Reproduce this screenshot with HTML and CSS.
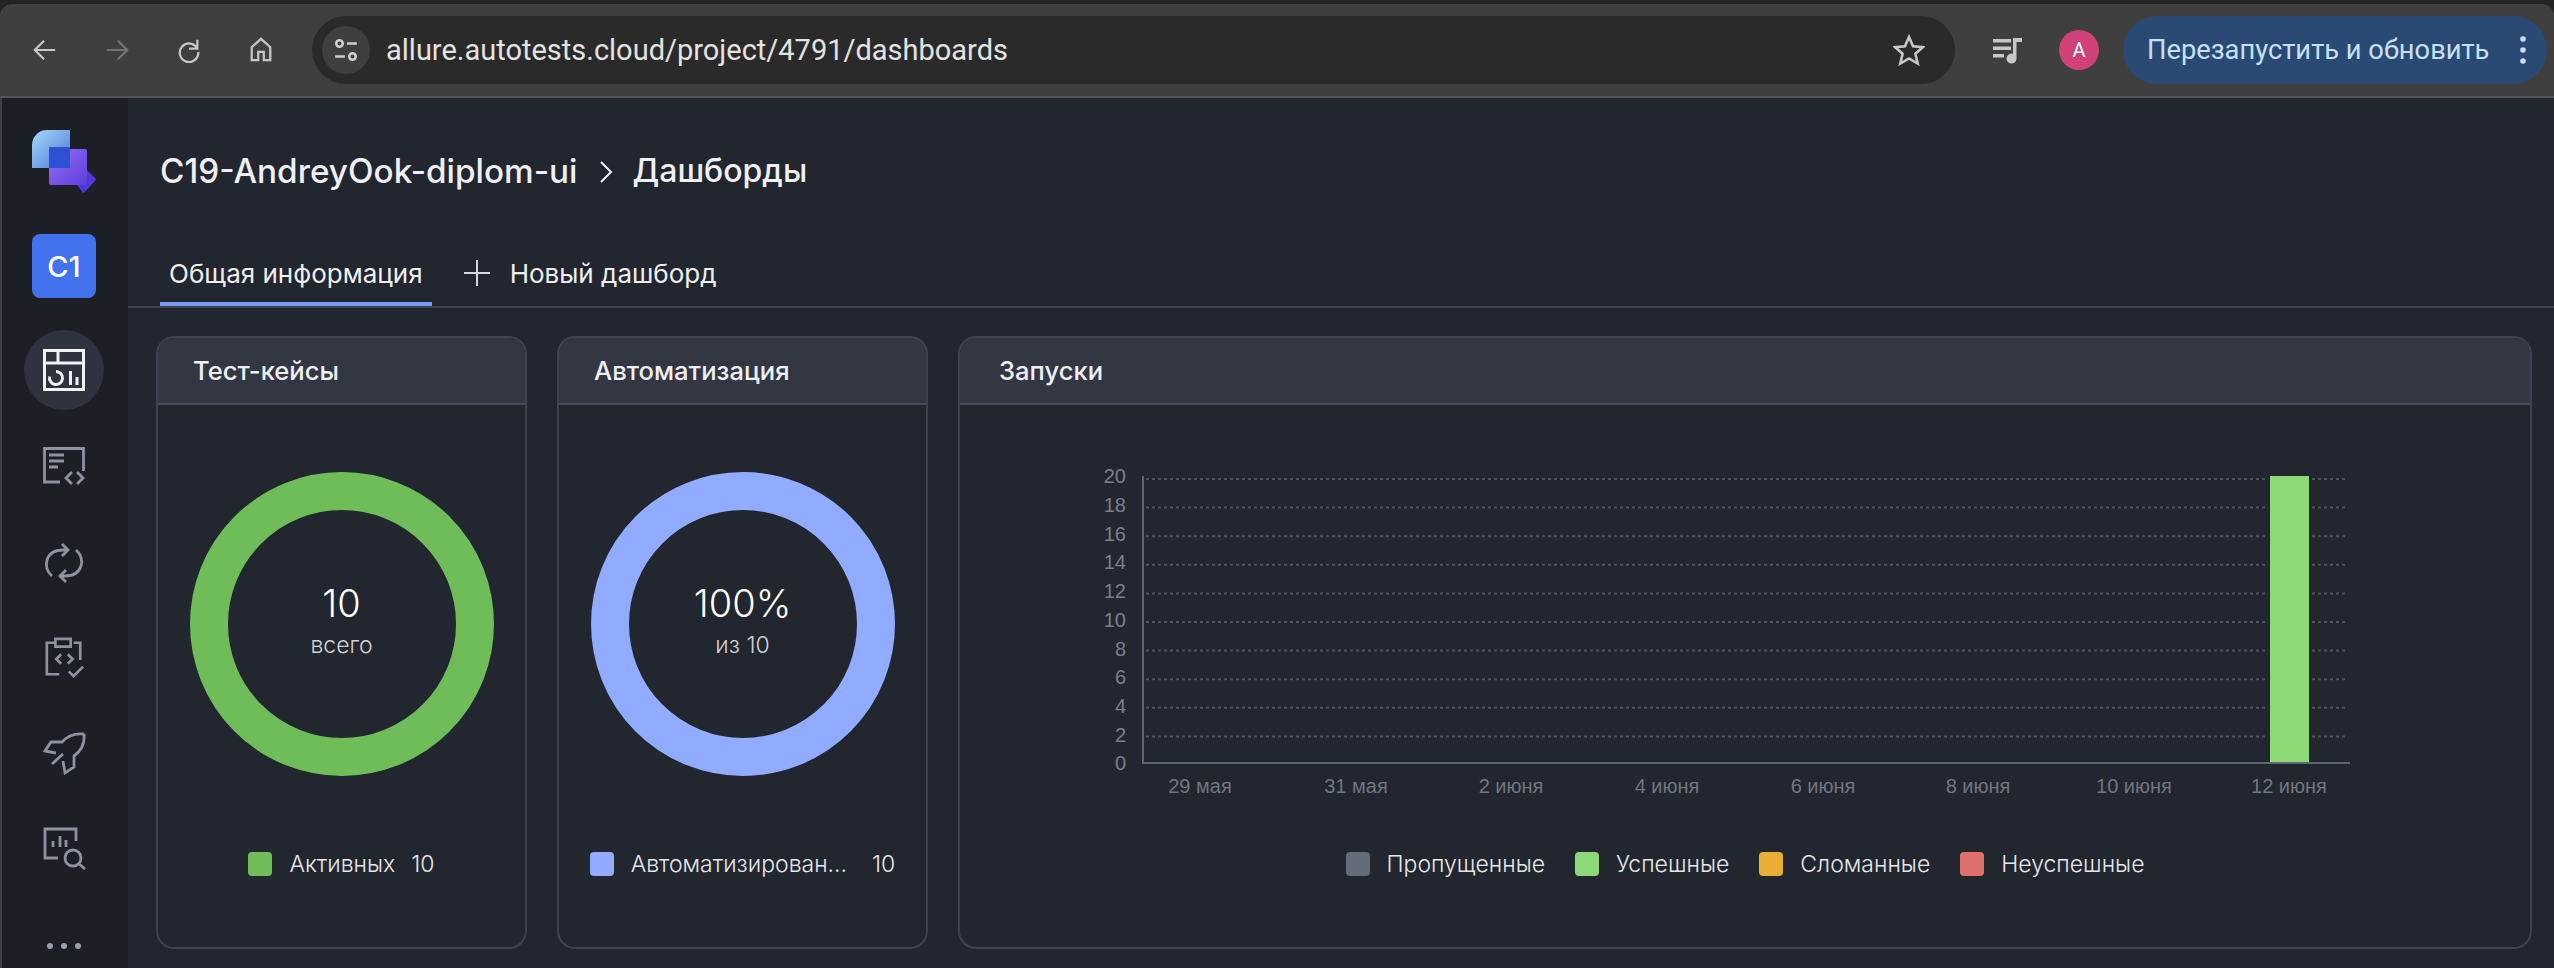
FILE: index.html
```html
<!DOCTYPE html>
<html lang="ru">

<head>
    <meta charset="UTF-8">
    <title>Дашборды</title>
    <link rel="stylesheet" href="styles.css">
</head>

<body>
    <header class="toolbar">
        <svg class="nav-icon" viewBox="0 0 28 28"><path d="M25 14H4M13 4L3 14l10 10"/></svg>
        <svg class="nav-icon dimmed" viewBox="0 0 28 28"><path d="M3 14h21M15 4l10 10-10 10"/></svg>
        <svg class="nav-icon" viewBox="0 0 28 28"><path d="M23 12.500A10 10 0 1 0 24 16M23 3v9.500h-9"/></svg>
        <svg class="nav-icon" viewBox="0 0 28 28"><path d="M4 25V11L14 2l10 9v14h-7v-9h-6v9z"/></svg>
        <div class="omnibox">
            <span class="site-chip">
                <svg viewBox="0 0 24 24"><circle cx="6" cy="6" r="3"/><path d="M13 6h9M2 18h9"/><circle cx="18" cy="18" r="3"/></svg>
            </span>
            <span class="url">allure.autotests.cloud/project/4791/dashboards</span>
            <svg class="star" viewBox="0 0 32 32"><path d="M16 3l4 9.200 10 .9-7.600 6.600 2.300 9.800L16 24.400 7.300 29.500l2.300-9.800L2 13.100l10-.9z"/></svg>
        </div>
        <svg class="media-icon" viewBox="0 0 32 28"><path d="M1 3h18V6.500H1zM1 10.500h18V14H1zM1 18h11v3.500H1z"/><path d="M21 2h9v4h-5.500v16.500a5 5 0 1 1-3.500-4.700z"/></svg>
        <span class="avatar">A</span>
        <div class="update-btn">
            <span>Перезапустить и обновить</span>
            <svg viewBox="0 0 8 32"><circle cx="4" cy="5" r="2.800"/><circle cx="4" cy="16" r="2.800"/><circle cx="4" cy="27" r="2.800"/></svg>
        </div>
    </header>

    <div class="app">
        <nav class="sidebar">
            <svg class="logo" viewBox="0 0 64 64">
                <defs>
                    <linearGradient id="logoBlue" x1="0" y1="0" x2="1" y2="1">
                        <stop offset="0" stop-color="#a5d8fc"/>
                        <stop offset="1" stop-color="#4a78d6"/>
                    </linearGradient>
                    <linearGradient id="logoPurple" x1="0" y1="0" x2="1" y2="1">
                        <stop offset="0" stop-color="#9a6ef8"/>
                        <stop offset="1" stop-color="#5a3edb"/>
                    </linearGradient>
                </defs>
                <path d="M43 52l12-12 9 9-1 2-10 11-2 1z" fill="#4f37d8"/>
                <path d="M17 19h36a2 2 0 0 1 2 2v32a2 2 0 0 1-2 2H19a2 2 0 0 1-2-2z" fill="url(#logoPurple)"/>
                <path d="M15 0h23v38H0V15A15 15 0 0 1 15 0z" fill="url(#logoBlue)"/>
                <rect x="17" y="17" width="21" height="21" fill="#2f50d2"/>
            </svg>
            <div class="project-tile">C1</div>
            <div class="nav-active">
                <svg class="side-icon" viewBox="0 0 42 42">
                    <path d="M1.500 1.500h39v39h-39zM1.500 14h39M15 1.500V14"/>
                    <path d="M13 22.500A6.500 6.500 0 1 1 6.700 27.500M27.500 22v14M34 28v8"/>
                </svg>
            </div>
            <svg class="side-icon" viewBox="0 0 42 42"><path d="M17 35H1.500V1.500h39V24M6 8h15M6 14h15M6 20h9M29 25l-6 6 6 6M34 25l6 6-6 6"/></svg>
            <svg class="side-icon" viewBox="0 0 42 42"><path d="M9 34C-1 26 2 8 20 8h5M19 2l6 6-6 6M33 8c10 8 7 26-11 26h-5M23 28l-6 6 6 6"/></svg>
            <svg class="side-icon" viewBox="0 0 42 44"><path d="M12 6H3v33h13M31 6h7v18M12 2h16v8H12zM18 18l-5 5 5 5M25 18l5 5-5 5M26 36l5 5 10-10"/></svg>
            <svg class="side-icon" viewBox="0 0 42 42"><path d="M41 2C32 1 25 3 19 10H8l-6 9 11 2M41 2c1 9-3 17-10 22v11l-9 6-2-12M9 32l11-10"/></svg>
            <svg class="side-icon" viewBox="0 0 42 42"><path d="M15 31H2V2h31v12M10 20v-6M17 20V9M23 20v-7"/><circle cx="30" cy="31" r="8"/><path d="M36 37l6 5"/></svg>
            <div class="more-dots"><i></i><i></i><i></i></div>
        </nav>

        <main class="content">
            <div class="breadcrumb">
                <span class="crumb-project">C19-AndreyOok-diplom-ui</span>
                <svg viewBox="0 0 14 24"><path d="M2 2l10 10L2 22"/></svg>
                <span>Дашборды</span>
            </div>

            <div class="tabs">
                <div class="tab active">Общая информация</div>
                <div class="tab">
                    <svg viewBox="0 0 26 26"><path d="M13 0v26M0 13h26"/></svg>
                    Новый дашборд
                </div>
            </div>

            <section class="cards">
                <article class="card">
                    <h2 class="card-title">Тест-кейсы</h2>
                    <div class="donut green">
                        <span class="donut-value">10</span>
                        <span class="donut-caption">всего</span>
                    </div>
                    <div class="legend">
                        <span class="swatch bg-green"></span>
                        <span>Активных</span>
                        <span class="legend-count">10</span>
                    </div>
                </article>

                <article class="card">
                    <h2 class="card-title">Автоматизация</h2>
                    <div class="donut blue">
                        <span class="donut-value">100%</span>
                        <span class="donut-caption">из 10</span>
                    </div>
                    <div class="legend">
                        <span class="swatch bg-blue"></span>
                        <span>Автоматизирован...</span>
                        <span class="legend-count wide">10</span>
                    </div>
                </article>

                <article class="card">
                    <h2 class="card-title wide">Запуски</h2>
                    <svg class="chart" viewBox="1050 440 1400 380">
                        <path class="grid" d="M1146 479H2268M2312 479H2348M1146 507.600H2268M2312 507.600H2348M1146 536.200H2268M2312 536.200H2348M1146 564.800H2268M2312 564.800H2348M1146 593.400H2268M2312 593.400H2348M1146 622H2268M2312 622H2348M1146 650.600H2268M2312 650.600H2348M1146 679.200H2268M2312 679.200H2348M1146 707.800H2268M2312 707.800H2348M1146 736.400H2268M2312 736.400H2348"/>
                        <path class="axis" d="M1143 476V763H2350"/>
                        <rect x="2270" y="476" width="39" height="286" fill="#8cd975"/>
                        <g class="y-labels">
                            <text x="1126" y="483">20</text>
                            <text x="1126" y="512">18</text>
                            <text x="1126" y="541">16</text>
                            <text x="1126" y="569">14</text>
                            <text x="1126" y="598">12</text>
                            <text x="1126" y="627">10</text>
                            <text x="1126" y="656">8</text>
                            <text x="1126" y="684">6</text>
                            <text x="1126" y="713">4</text>
                            <text x="1126" y="742">2</text>
                            <text x="1126" y="770">0</text>
                        </g>
                        <g class="x-labels">
                            <text x="1200" y="793">29 мая</text>
                            <text x="1356" y="793">31 мая</text>
                            <text x="1511" y="793">2 июня</text>
                            <text x="1667" y="793">4 июня</text>
                            <text x="1823" y="793">6 июня</text>
                            <text x="1978" y="793">8 июня</text>
                            <text x="2134" y="793">10 июня</text>
                            <text x="2289" y="793">12 июня</text>
                        </g>
                    </svg>
                    <div class="legend runs">
                        <span class="legend-item"><span class="swatch bg-gray"></span>Пропущенные</span>
                        <span class="legend-item"><span class="swatch bg-lime"></span>Успешные</span>
                        <span class="legend-item"><span class="swatch bg-orange"></span>Сломанные</span>
                        <span class="legend-item"><span class="swatch bg-red"></span>Неуспешные</span>
                    </div>
                </article>
            </section>
        </main>
    </div>
</body>

</html>
```

FILE: styles.css
```css
* {
    box-sizing: border-box;
}

html,
body {
    margin: 0;
    height: 968px;
    overflow: hidden;
}

body {
    font-family: 'Inter', 'Noto Sans', sans-serif;
    background-color: #232323;
    padding-top: 4px;
    color: #eef0f5;
}

/* browser toolbar */
.toolbar {
    height: 94px;
    display: flex;
    align-items: center;
    padding: 0 6px 0 32px;
    background-color: #3f3f3f;
    border-radius: 12px 12px 0 0;
    border-bottom: 2px solid #555;
}

.nav-icon {
    width: 26px;
    height: 26px;
    margin-right: 46px;
    fill: none;
    stroke: #c7c7c7;
    stroke-width: 2.4;
}

.nav-icon.dimmed {
    stroke: #737373;
}

.nav-icon:nth-child(4) {
    margin-right: 38px;
}

.omnibox {
    width: 1643px;
    height: 68px;
    display: flex;
    align-items: center;
    padding: 0 30px 0 10px;
    background-color: #2a2a2a;
    border-radius: 34px;
}

.site-chip {
    width: 48px;
    height: 48px;
    display: flex;
    align-items: center;
    justify-content: center;
    background-color: #3f3f3f;
    border-radius: 50%;
    margin-right: 16px;
}

.site-chip svg {
    width: 26px;
    height: 26px;
    fill: none;
    stroke: #d0d0d0;
    stroke-width: 2.4;
}

.url {
    flex: 1;
    font-family: 'Roboto', sans-serif;
    font-size: 29px;
    color: #e3e3e3;
}

.star {
    width: 32px;
    height: 32px;
    fill: none;
    stroke: #c7c7c7;
    stroke-width: 2.6;
}

.media-icon {
    width: 32px;
    height: 28px;
    margin: 0 35px 0 37px;
    fill: #c7c7c7;
}

.avatar {
    width: 40px;
    height: 40px;
    margin-right: 24px;
    display: flex;
    align-items: center;
    justify-content: center;
    background-color: #cf4178;
    border-radius: 50%;
    color: #fff;
    font-family: 'Roboto', sans-serif;
    font-size: 20px;
}

.update-btn {
    width: 424px;
    height: 68px;
    display: flex;
    align-items: center;
    justify-content: space-between;
    padding: 0 20px 0 24px;
    background-color: #2b4a73;
    border-radius: 34px;
    color: #c6e0fb;
    font-family: 'Roboto', sans-serif;
    font-size: 27.3px;
}

.update-btn svg {
    width: 8px;
    height: 32px;
    fill: #c6e0fb;
}

/* app */
.app {
    display: flex;
    height: 870px;
    background-color: #22262e;
}

.sidebar {
    width: 128px;
    flex-shrink: 0;
    display: flex;
    flex-direction: column;
    align-items: center;
    padding-top: 32px;
    background-color: #1c1f25;
    border-left: 2px solid #3c4148;
}

.sidebar > * {
    margin-left: -2px;
}

.logo {
    width: 64px;
    height: 64px;
    margin-bottom: 40px;
}

.project-tile {
    width: 64px;
    height: 64px;
    margin-bottom: 32px;
    display: flex;
    align-items: center;
    justify-content: center;
    background-color: #4272ee;
    border-radius: 8px;
    color: #fff;
    font-size: 29px;
    font-weight: 500;
}

.nav-active {
    width: 80px;
    height: 80px;
    margin-bottom: 37px;
    display: flex;
    align-items: center;
    justify-content: center;
    background-color: #2f333e;
    border-radius: 50%;
}

.side-icon {
    width: 42px;
    height: 42px;
    margin-bottom: 53px;
    flex-shrink: 0;
    fill: none;
    stroke: #8d939f;
    stroke-width: 2.8;
    overflow: visible;
}

.nav-active .side-icon {
    margin: 0;
    stroke: #f1f2f4;
    stroke-width: 3;
}

.more-dots {
    display: flex;
    gap: 8px;
    margin-top: 21px;
}

.more-dots i {
    width: 6px;
    height: 6px;
    background-color: #9aa0ab;
    border-radius: 50%;
}

/* main */
.content {
    flex: 1;
    display: flex;
    flex-direction: column;
}

.breadcrumb {
    height: 146px;
    padding: 53px 0 0 32px;
    display: flex;
    align-items: flex-start;
    font-size: 32px;
    font-weight: 500;
    line-height: 40px;
}

.crumb-project {
    font-size: 33.3px;
}

.breadcrumb svg {
    width: 14px;
    height: 24px;
    margin: 9px 19px 0 22px;
    fill: none;
    stroke: #eef0f5;
    stroke-width: 2;
}

.tabs {
    height: 64px;
    display: flex;
    padding-left: 32px;
    border-bottom: 2px solid #3d4350;
}

.tab {
    height: 62px;
    padding: 0 9px;
    display: flex;
    align-items: center;
    gap: 20px;
    font-size: 26px;
    border-bottom: 4px solid transparent;
}

.tab svg {
    width: 26px;
    height: 26px;
    margin-left: 23px;
    fill: none;
    stroke: #d5d8df;
    stroke-width: 2;
}

.tab.active {
    border-bottom-color: #7b9af5;
}

.cards {
    display: grid;
    grid-template-columns: 371px 371px 1fr;
    gap: 30px;
    height: 613px;
    margin: 28px 22px 0 28px;
}

.card {
    border: 2px solid #3d4350;
    border-radius: 18px;
    overflow: hidden;
    display: flex;
    flex-direction: column;
    align-items: center;
}

.card-title {
    width: 100%;
    height: 67px;
    flex-shrink: 0;
    margin: 0;
    padding: 0 0 0 35px;
    display: flex;
    align-items: center;
    background-color: #333743;
    border-bottom: 2px solid #454b59;
    font-size: 25.6px;
    font-weight: 500;
}

.card-title.wide {
    padding-left: 39px;
}

.donut {
    width: 304px;
    height: 304px;
    flex-shrink: 0;
    margin-top: 67px;
    padding-bottom: 7px;
    border: 38px solid;
    border-radius: 50%;
    display: flex;
    flex-direction: column;
    align-items: center;
    justify-content: center;
}

.donut.green {
    border-color: #6fbd59;
}

.donut.blue {
    border-color: #90abff;
}

.donut-value {
    font-size: 38px;
    font-weight: 300;
    line-height: 46px;
    color: #fff;
}

.donut-caption {
    margin-top: 3px;
    font-size: 23px;
    font-weight: 300;
    line-height: 32px;
    color: #cfd2d8;
}

.legend {
    margin-top: 76px;
    display: flex;
    align-items: center;
    gap: 17px;
    font-size: 23px;
    font-weight: 300;
    line-height: 24px;
    color: #e6e8ec;
}

.legend-count {
    margin-left: -1px;
}

.legend-count.wide {
    margin-left: 8px;
}

.legend.runs {
    margin-top: 32px;
    gap: 30px;
}

.legend-item {
    display: flex;
    align-items: center;
    gap: 17px;
}

.swatch {
    width: 24px;
    height: 24px;
    border-radius: 4px;
}

.bg-green {
    background-color: #6fbd59;
}

.bg-blue {
    background-color: #90abff;
}

.bg-gray {
    background-color: #656c79;
}

.bg-lime {
    background-color: #8cd975;
}

.bg-orange {
    background-color: #ebae35;
}

.bg-red {
    background-color: #dd706b;
}

/* chart */
.chart {
    width: 1400px;
    height: 380px;
    flex-shrink: 0;
    align-self: flex-start;
    margin: 35px 0 0 90px;
    font-family: 'Liberation Sans', sans-serif;
    font-size: 20px;
}

.grid {
    fill: none;
    stroke: #4d535f;
    stroke-width: 2;
    stroke-dasharray: 3 3;
}

.axis {
    fill: none;
    stroke: #5f6673;
    stroke-width: 2;
}

.y-labels text {
    text-anchor: end;
    fill: #7b808a;
}

.x-labels text {
    text-anchor: middle;
    fill: #71767f;
}
```
